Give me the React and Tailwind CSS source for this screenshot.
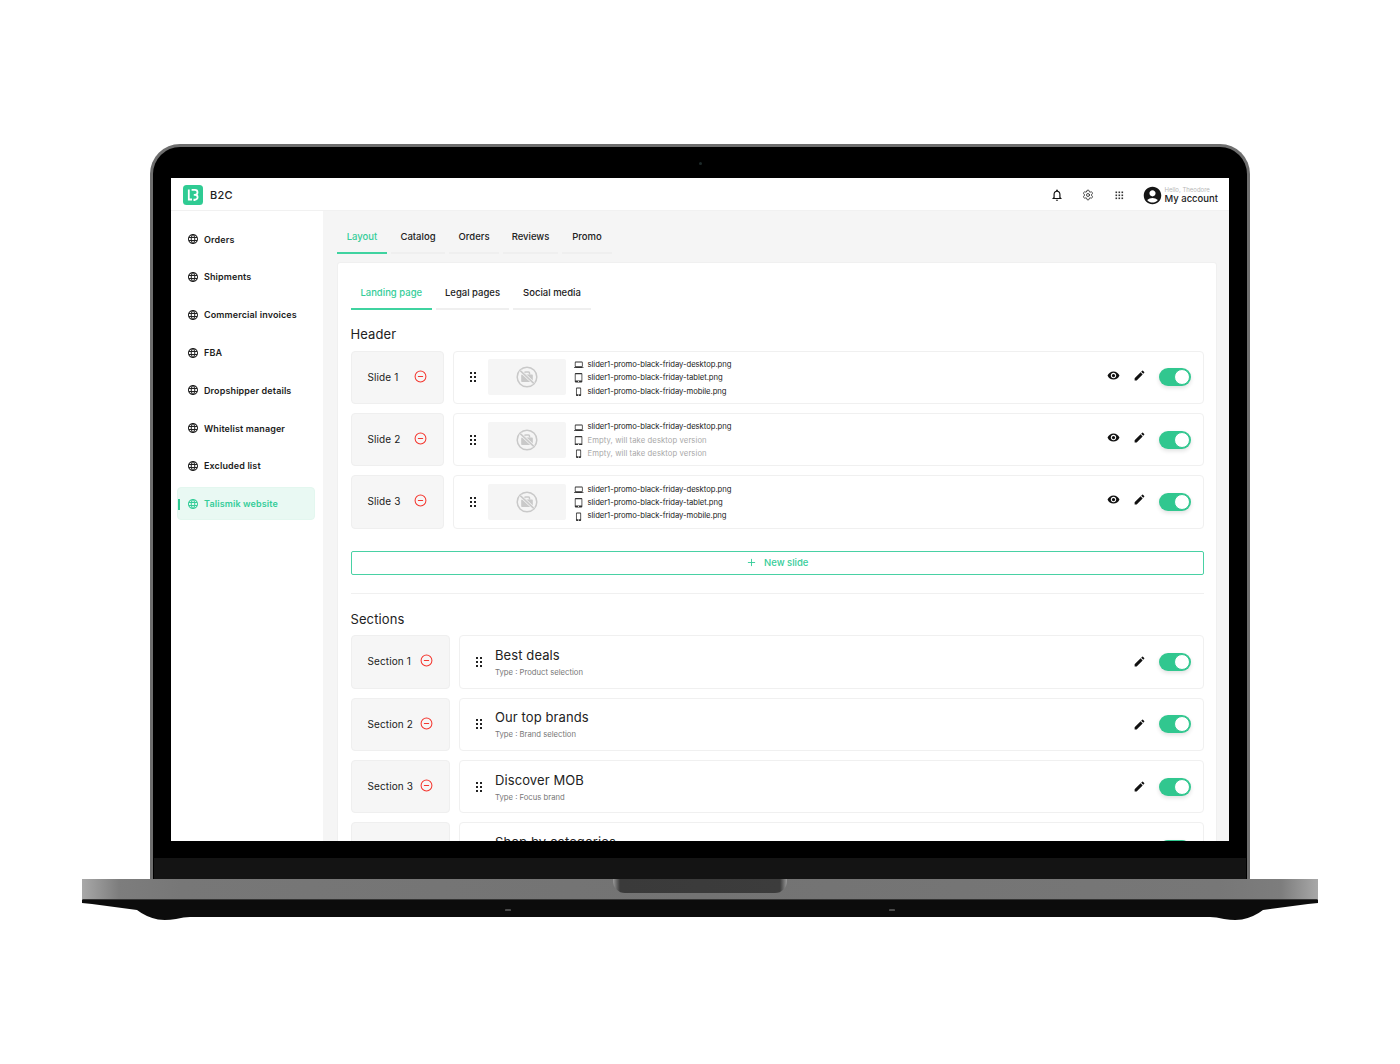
import React from "react";
import { MdLanguage, MdVisibility, MdEdit, MdNotificationsNone, MdAccountCircle, MdOutlineLaptop, MdOutlineTabletMac, MdOutlinePhoneIphone } from "react-icons/md";
import { CircleMinus, Plus, Settings } from "lucide-react";

const font = { fontFamily: "Inter, 'Liberation Sans', sans-serif" };
const nav = ["Orders", "Shipments", "Commercial invoices", "FBA", "Dropshipper details", "Whitelist manager", "Excluded list", "Talismik website"];
const D = "slider1-promo-black-friday-desktop.png";
const T = "slider1-promo-black-friday-tablet.png";
const M = "slider1-promo-black-friday-mobile.png";
const E = "Empty, will take desktop version";
const slides = [
  ["Slide 1", D, T, M],
  ["Slide 2", D, E, E],
  ["Slide 3", D, T, M],
];
const sections = [
  ["Section 1", "Best deals", "Type : Product selection"],
  ["Section 2", "Our top brands", "Type : Brand selection"],
  ["Section 3", "Discover MOB", "Type : Focus brand"],
  ["Section 4", "Shop by categories", "Type : Category selection"],
];

function Grip() {
  return (
    <svg width="6" height="10" viewBox="0 0 6 10" className="shrink-0 fill-[#222]">
      {[0, 4, 8].map((y) => (
        <g key={y}>
          <rect x="0" y={y} width="2" height="2" />
          <rect x="4" y={y} width="2" height="2" />
        </g>
      ))}
    </svg>
  );
}

function Toggle() {
  return (
    <div className="flex h-[18px] w-8 items-center justify-end rounded-full bg-[#31c78f] pr-px shadow-[0_2px_4px_rgba(0,0,0,0.12)]">
      <div className="h-4 w-4 rounded-full border border-[#31c78f] bg-white" />
    </div>
  );
}

function NoPhoto() {
  return (
    <svg width="22" height="22" viewBox="0 0 22 22" fill="none" stroke="#c9c9c9" strokeWidth="1.5">
      <circle cx="11" cy="11" r="9.8" />
      <path d="M6 8.5h10a.8.8 0 0 1 .8.8v6a.8.8 0 0 1-.8.8H6a.8.8 0 0 1-.8-.8v-6a.8.8 0 0 1 .8-.8z" fill="#c9c9c9" stroke="none" />
      <path d="M8.5 8.5V7a1 1 0 0 1 1-1h3a1 1 0 0 1 1 1v1.5" />
      <path d="M4.2 4.6L17.8 17.4" stroke="#f5f5f5" strokeWidth="3" />
      <path d="M4.2 4.6L17.8 17.4" />
    </svg>
  );
}

function Tab({ label, active, className }) {
  return (
    <div className={`flex items-center justify-center border-b-2 font-medium ${active ? "border-[#3fd3a0] text-[#35cd99]" : "border-[#efefef] text-[#222]"} ${className}`}>
      {label}
    </div>
  );
}

function Row({ left, widthClass, children }) {
  return (
    <div className="flex h-[53.4px] gap-[9px]">
      <div className={`flex shrink-0 items-center rounded-[4px] border border-[#efefef] bg-[#f6f6f6] pl-4 ${widthClass}`}>
        <span className="text-[10px] tracking-[0.1px] text-[#222]">{left}</span>
        <CircleMinus size={13} color="#f4362e" strokeWidth={1.9} className="ml-auto mr-[16px] -translate-y-px" />
      </div>
      <div className="flex min-w-0 flex-1 items-center rounded-[4px] border border-[#f0f0f0] bg-white">{children}</div>
    </div>
  );
}

function FileLine({ Icon, text }) {
  const empty = text === E;
  return (
    <div className="flex h-[13.3px] items-center">
      <Icon size={9.5} color="#333" className="ml-[-0.5px] shrink-0" />
      <span className={`ml-[4px] whitespace-nowrap text-[7.7px] leading-none ${empty ? "tracking-[0.08px] text-[#a9a9a9]" : "tracking-[-0.05px] text-[#222]"}`}>{text}</span>
    </div>
  );
}

export default function App() {
  return (
    <div className="flex h-[1064px] flex-col items-center overflow-hidden bg-white pt-[144px]" style={font}>
      {/* lid */}
      <div className="flex w-[1100px] flex-col rounded-t-[30px] border-x-[3px] border-t-[3px] border-[#6e6e6e] bg-black">
        <div className="flex h-[31px] items-center justify-center">
          <div className="mt-[2px] h-[3px] w-[3px] rounded-full bg-[#1d2a2a]" />
        </div>
        <div className="mx-[18px] flex h-[663px] flex-col overflow-hidden bg-white">
          {/* top bar */}
          <div className="flex h-[33px] shrink-0 items-center border-b border-[#f1f1f1] pl-3 pr-[11px] pt-[2px]">
            <svg width="20" height="20" viewBox="0 0 20 20" className="shrink-0">
              <rect width="20" height="20" rx="3.5" fill="#2fcb93" />
              <path d="M5.8 4.5v10h3.2M8.6 4.8h3.4a2.4 2.4 0 0 1 0 5h-1.2m0 0h1.4a2.4 2.4 0 0 1 0 4.8h-.8v1.4" fill="none" stroke="#fff" strokeWidth="1.8" />
            </svg>
            <span className="ml-[7px] text-[11px] font-medium tracking-[0.2px] text-[#222]">B2C</span>
            <MdNotificationsNone size={14} color="#111" className="ml-auto" />
            <Settings size={12} color="#222" strokeWidth={1.6} className="ml-[18px]" />
            <svg width="9" height="9" viewBox="0 0 9 9" className="ml-[21px] fill-[#333]">
              {[0.5, 3.5, 6.5].map((y) => [0.5, 3.5, 6.5].map((x) => <rect key={`${x}-${y}`} x={x} y={y} width="1.6" height="1.6" />))}
            </svg>
            <MdAccountCircle size={21} color="#151515" className="ml-[18px]" />
            <div className="ml-[2px] flex flex-col">
              <span className="text-[6px] leading-[7px] text-[#b8b8b8]">Hello, Theodore</span>
              <span className="text-[9.5px] font-medium leading-[11px] text-[#222]">My account</span>
            </div>
          </div>
          <div className="flex min-h-0 flex-1">
            {/* sidebar */}
            <div className="flex w-[152px] shrink-0 flex-col gap-[4.8px] px-[6px] pt-[11.8px]">
              {nav.map((n, i) => {
                const active = i === nav.length - 1;
                return (
                  <div key={n} className={`relative flex h-[33px] w-[138px] shrink-0 items-center rounded-[4px] ${active ? "border border-[#e3f7ef] bg-[#e9f9f3] pl-[9px]" : "pl-[10px]"}`}>
                    {active && <div className="absolute left-0 top-[11px] h-[11px] w-[2px] bg-[#2fcb93]" />}
                    <MdLanguage size={12} color={active ? "#35cd99" : "#222"} className="shrink-0" />
                    <span className={`ml-[5px] whitespace-nowrap text-[9px] font-semibold tracking-[0.12px] ${active ? "text-[#35cd99]" : "text-[#1c1c1c]"}`}>{n}</span>
                  </div>
                );
              })}
            </div>
            {/* main */}
            <div className="min-w-0 flex-1 bg-[#f5f5f5] pl-[14px] pr-3">
              <div className="flex h-[43px] items-end gap-1 pt-[16px] text-[9.5px]">
                <Tab label="Layout" active className="h-[26px] w-[50px] pb-[5px]" />
                <Tab label="Catalog" className="h-[26px] w-[54px] pb-[5px]" />
                <Tab label="Orders" className="h-[26px] w-[50px] pb-[5px]" />
                <Tab label="Reviews" className="h-[26px] w-[55px] pb-[5px]" />
                <Tab label="Promo" className="h-[26px] w-[50px] pb-[5px]" />
              </div>
              <div className="mt-[8px] rounded-[3px] border border-[#f0f0f0] bg-white pb-6 pl-[12.5px] pr-3">
                <div className="flex h-[47px] items-end gap-1 text-[9.5px]">
                  <Tab label="Landing page" active className="h-[31px] w-[81.5px]" />
                  <Tab label="Legal pages" className="h-[31px] w-[73px]" />
                  <Tab label="Social media" className="h-[31px] w-[78px]" />
                </div>
                <div className="mt-[15px] flex h-[20px] items-center text-[13px] tracking-[0.1px] text-[#222]">Header</div>
                <div className="mt-[5.5px] flex flex-col gap-[9px]">
                  {slides.map((s) => (
                    <Row key={s[0]} left={s[0]} widthClass="w-[93px]">
                      <div className="ml-4 flex items-center">
                        <Grip />
                      </div>
                      <div className="ml-3 flex h-[36px] w-[78px] shrink-0 items-center justify-center rounded-[2px] bg-[#f5f5f5]">
                        <NoPhoto />
                      </div>
                      <div className="ml-[9px] mt-[2px] flex flex-col">
                        <FileLine Icon={MdOutlineLaptop} text={s[1]} />
                        <FileLine Icon={MdOutlineTabletMac} text={s[2]} />
                        <FileLine Icon={MdOutlinePhoneIphone} text={s[3]} />
                      </div>
                      <MdVisibility size={13} color="#111" className="ml-auto -translate-y-[2px]" />
                      <MdEdit size={13} color="#111" className="ml-[13px] -translate-y-[2px]" />
                      <div className="ml-[13px] mr-[12px]"><Toggle /></div>
                    </Row>
                  ))}
                </div>
                <div className="mt-[22px] flex h-[24.5px] items-center justify-center gap-[7px] rounded-[2px] border border-[#49d1a4] text-[9.5px] font-medium text-[#35cd99]">
                  <Plus size={11} color="#35cd99" />
                  New slide
                </div>
                <div className="mt-[18px] h-px bg-[#f0f0f0]" />
                <div className="mt-[15.5px] flex h-[20px] items-center text-[13px] tracking-[0.1px] text-[#222]">Sections</div>
                <div className="mt-[5.5px] flex flex-col gap-[9px]">
                  {sections.map((s) => (
                    <Row key={s[0]} left={s[0]} widthClass="w-[99.5px]">
                      <div className="ml-4"><Grip /></div>
                      <div className="ml-[13px] flex flex-col pt-[2px]">
                        <span className="text-[13px] leading-[16px] tracking-[0.1px] text-[#222]">{s[1]}</span>
                        <span className="mt-[4px] text-[7.7px] leading-[12px] text-[#777]">{s[2]}</span>
                      </div>
                      <MdEdit size={13} color="#111" className="ml-auto" />
                      <div className="ml-[13px] mr-[12px]"><Toggle /></div>
                    </Row>
                  ))}
                </div>
              </div>
            </div>
          </div>
        </div>
        <div className="h-[17px] bg-black" />
        <div className="mx-px h-[21px] bg-[#141414]" />
      </div>
      {/* base */}
      <div className="flex h-[21px] w-[1236px] shrink-0 justify-center rounded-b-[1px] border-b border-[#333] bg-[linear-gradient(90deg,#a8a8a8_0%,#7d7d7d_3%,#777_8%,#737373_50%,#777_92%,#7d7d7d_97%,#a8a8a8_100%)]">
        <div className="h-[14px] w-[174px] rounded-b-[12px] bg-[linear-gradient(90deg,#999_0%,#3a3a3a_4%,#3c3c3c_96%,#999_100%)]" />
      </div>
      <svg width="1236" height="22" viewBox="0 0 1236 22" className="shrink-0">
        <path d="M0 0V3L10 4L55 10Q64 17 76 19.5Q84 20.5 94 19Q102 17 108 17H1128Q1134 17 1142 19Q1152 20.5 1160 19.5Q1172 17 1181 10L1226 4L1236 3V0Z" fill="#0c0c0c" />
        <rect x="423" y="9.5" width="6" height="1" rx="0.5" fill="#888" />
        <rect x="807" y="9.5" width="6" height="1" rx="0.5" fill="#888" />
      </svg>
    </div>
  );
}
